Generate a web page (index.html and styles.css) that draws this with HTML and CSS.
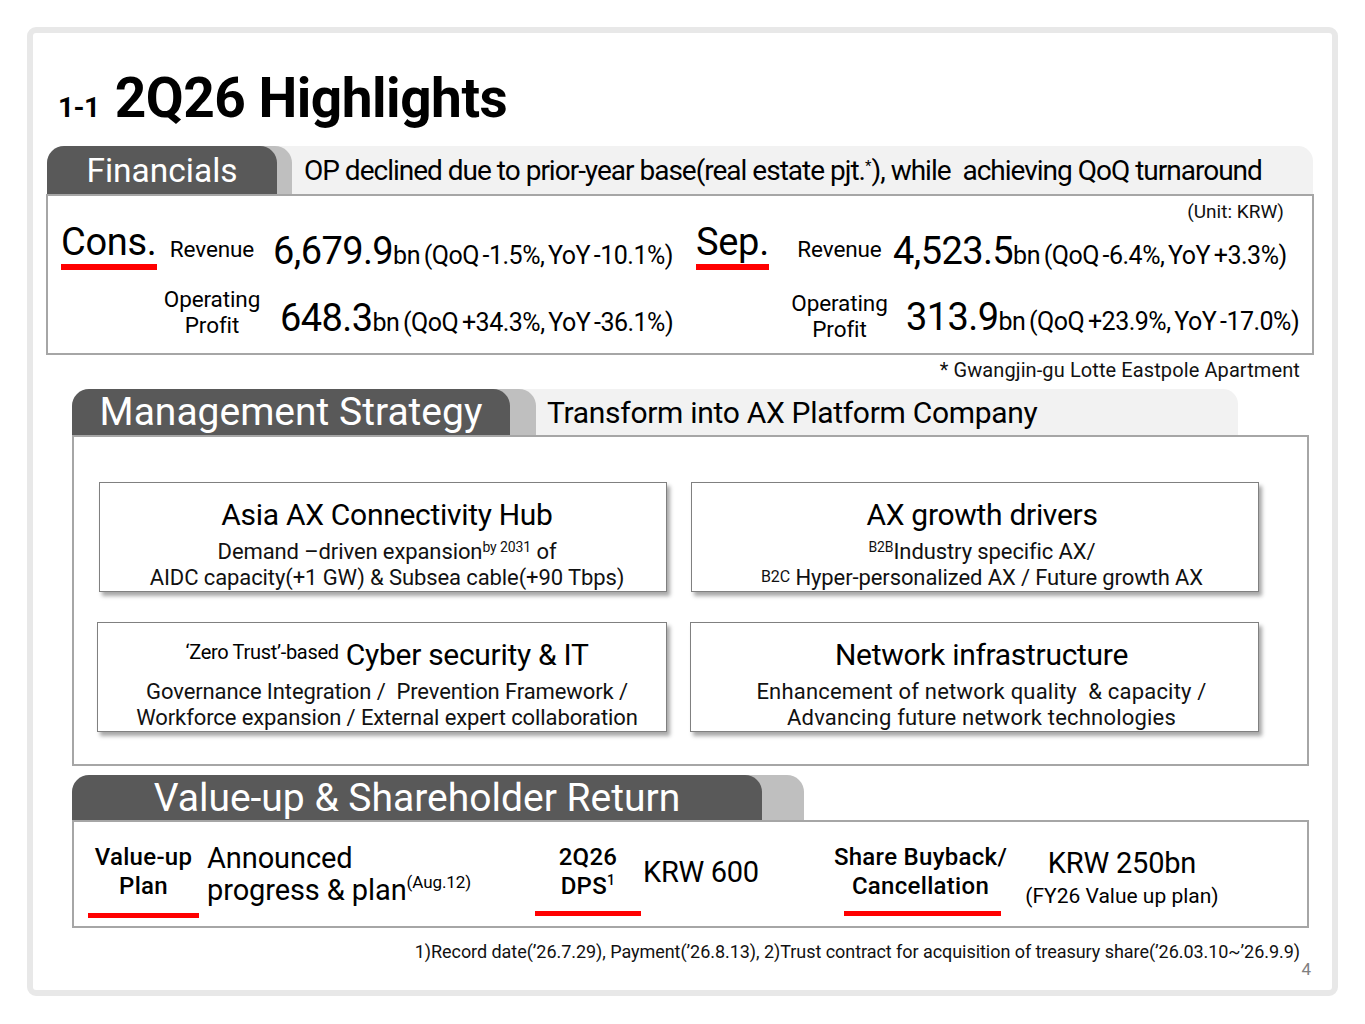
FILE: index.html
```html
<!DOCTYPE html>
<html lang="en">
<head>
<meta charset="utf-8">
<title>2Q26 Highlights</title>
<link rel="stylesheet" href="styles.css">
</head>
<body>
<div class="frame">
  <h1 class="title"><span class="title-num">1-1</span><span class="title-main">2Q26 Highlights</span></h1>

  <section class="fin">
    <div class="hdr fin-hdr">
      <div class="tab fin-tab">Financials</div>
      <div class="hdr-text fin-hdr-text">OP declined due to prior-year base(real estate pjt.<sup>*</sup>), while &nbsp;achieving QoQ turnaround</div>
    </div>
    <div class="fin-box">
      <div class="unit">(Unit: KRW)</div>
      <div class="fin-grid">
        <div class="fin-half fin-left">
          <div class="seg"><span class="seg-name">Cons.</span></div>
          <div class="fin-rows">
            <div class="fin-row r1">
              <div class="metric">Revenue</div>
              <div class="val v-rev"><span class="big">6,679.9</span><span class="small">bn (QoQ -1.5%, YoY -10.1%)</span></div>
            </div>
            <div class="fin-row r2">
              <div class="metric">Operating<br>Profit</div>
              <div class="val v-op"><span class="big">648.3</span><span class="small">bn (QoQ +34.3%, YoY -36.1%)</span></div>
            </div>
          </div>
        </div>
        <div class="fin-half fin-right">
          <div class="seg seg-sep"><span class="seg-name">Sep.</span></div>
          <div class="fin-rows">
            <div class="fin-row r1">
              <div class="metric">Revenue</div>
              <div class="val v-rev2"><span class="big">4,523.5</span><span class="small">bn (QoQ -6.4%, YoY +3.3%)</span></div>
            </div>
            <div class="fin-row r2 r2-right">
              <div class="metric">Operating<br>Profit</div>
              <div class="val v-op2"><span class="big">313.9</span><span class="small">bn (QoQ +23.9%, YoY -17.0%)</span></div>
            </div>
          </div>
        </div>
      </div>
    </div>
    <div class="note">* Gwangjin-gu Lotte Eastpole Apartment</div>
  </section>

  <section class="mgmt">
    <div class="hdr mgmt-hdr">
      <div class="tab mgmt-tab">Management Strategy</div>
      <div class="hdr-text mgmt-hdr-text">Transform into AX Platform Company</div>
    </div>
    <div class="mgmt-box">
      <div class="card">
        <div class="card-title">Asia AX Connectivity Hub</div>
        <div class="card-line">Demand –driven expansion<sup class="sup-s">by 2031</sup> of</div>
        <div class="card-line">AIDC capacity(+1 GW) &amp; Subsea cable(+90 Tbps)</div>
      </div>
      <div class="card card-r">
        <div class="card-title">AX growth drivers</div>
        <div class="card-line"><sup class="sup-s">B2B</sup>Industry specific AX/</div>
        <div class="card-line"><span class="tag">B2C</span> Hyper-personalized AX / Future growth AX</div>
      </div>
      <div class="card card-l2">
        <div class="card-title"><span class="pre">‘Zero Trust’-based</span> Cyber security &amp; IT</div>
        <div class="card-line">Governance Integration / &nbsp;Prevention Framework /</div>
        <div class="card-line">Workforce expansion / External expert collaboration</div>
      </div>
      <div class="card card-r card-b">
        <div class="card-title">Network infrastructure</div>
        <div class="card-line">Enhancement of network quality &nbsp;&amp; capacity /</div>
        <div class="card-line">Advancing future network technologies</div>
      </div>
    </div>
  </section>

  <section class="vu">
    <div class="hdr vu-hdr">
      <div class="tab vu-tab">Value-up &amp; Shareholder Return</div>
    </div>
    <div class="vu-box">
      <div class="vu-label lab1">
        <div class="lab-text">Value-up<br>Plan</div>
        <div class="lab-line"></div>
      </div>
      <div class="vu-text announce">Announced<br>progress &amp; plan<sup class="sup-a">(Aug.12)</sup></div>
      <div class="vu-label lab2">
        <div class="lab-text">2Q26<br>DPS<sup class="sup-d">1</sup></div>
        <div class="lab-line"></div>
      </div>
      <div class="vu-text krw600">KRW 600</div>
      <div class="vu-label lab3">
        <div class="lab-text">Share Buyback/<br>Cancellation</div>
        <div class="lab-line"></div>
      </div>
      <div class="vu-text krw250">
        <div class="k-main">KRW 250bn</div>
        <div class="k-sub">(FY26 Value up plan)</div>
      </div>
    </div>
  </section>

  <div class="foot">1)Record date(’26.7.29), Payment(’26.8.13), 2)Trust contract for acquisition of treasury share(’26.03.10~’26.9.9)</div>
  <div class="page">4</div>
</div>
</body>
</html>
```

FILE: styles.css
```css
* { box-sizing: border-box; }
html, body { margin: 0; padding: 0; background: #ffffff; }
body { font-family: Roboto, "Liberation Sans", sans-serif; color: #000; }

.frame {
  margin: 27px 0 0 27px;
  width: 1311px;
  height: 969px;
  border: 6px solid #e8e8e8;
  border-radius: 9px;
  background: #fff;
  display: flex;
  flex-direction: column;
}

/* Title */
.title {
  margin: 35px 0 18px 25px;
  height: 60px;
  line-height: 60px;
  font-weight: 700;
  display: flex;
  align-items: baseline;
}
.title-num { font-size: 28px; margin-right: 15px; letter-spacing: -0.5px; }
.title-main { font-size: 55px; letter-spacing: -0.5px; }

/* Generic section headers */
.hdr {
  display: flex;
  align-items: center;
  background: #f2f2f2;
}
.tab {
  background: #595959;
  color: #fff;
  display: flex;
  align-items: center;
  justify-content: center;
  border-radius: 17px 17px 0 0;
  flex: none;
  position: relative;
}
.hdr-text { color: #000; white-space: nowrap; }

/* Financials */
.fin { margin-left: 13px; width: 1268px; }
.fin-hdr { height: 48px; width: 1266px; margin-left: 1px; border-radius: 17px 15px 0 0; }
.fin-tab { width: 230px; height: 48px; font-size: 33.5px; box-shadow: 15px 0 0 #bfbfbf; }
.fin-hdr-text {
  margin-left: 27px;
  font-size: 28px;
  letter-spacing: -1px;
  padding-top: 1px;
}
.fin-hdr-text sup { font-size: 15px; vertical-align: 9px; letter-spacing: 0; line-height: 0; }

.fin-box {
  height: 161px;
  border: 2px solid #a6a6a6;
  padding: 5px 28px 0 13px;
}
.unit { text-align: right; font-size: 19px; line-height: 22px; color: #111; }
.fin-grid { display: flex; }
.fin-half { display: flex; flex: none; }
.fin-left { width: 635px; }
.seg { width: 99px; flex: none; }
.seg-sep { width: 93px; }
.seg-name {
  display: inline-block;
  font-size: 38px;
  line-height: 38px;
  padding-bottom: 3px;
  border-bottom: 6px solid #ff0000;
  letter-spacing: -0.3px;
}
.fin-rows { display: flex; flex-direction: column; }
.fin-row { display: flex; align-items: center; }
.r1 { height: 52px; }
.r2 { height: 74px; }
.metric {
  width: 104px;
  flex: none;
  text-align: center;
  font-size: 22.5px;
  line-height: 26px;
  letter-spacing: -0.1px;
}
.fin-right .metric { width: 101px; }
.r2-right { padding-top: 8px; }
.val { white-space: nowrap; }
.v-rev { margin-left: 9px; padding-top: 4px; }
.v-rev2 { margin-left: 3px; padding-top: 4px; }
.v-op { margin-left: 16px; padding-top: 12px; }
.v-op2 { margin-left: 16px; padding-top: 2px; }
.big { font-size: 38px; letter-spacing: -0.6px; }
.small { font-size: 25px; letter-spacing: -0.5px; word-spacing: -2px; }

.note {
  height: 34px;
  line-height: 30px;
  text-align: right;
  padding-right: 14px;
  font-size: 20px;
  letter-spacing: 0.1px;
  color: #111;
}

/* Management */
.mgmt { margin-left: 39px; width: 1237px; }
.mgmt-hdr { height: 46px; width: 1166px; border-radius: 17px 15px 0 0; }
.mgmt-tab { width: 438px; height: 46px; font-size: 39px; box-shadow: 26px 0 0 #bfbfbf; }
.mgmt-hdr-text { margin-left: 37px; font-size: 30px; letter-spacing: -0.3px; }

.mgmt-box {
  height: 331px;
  border: 2px solid #a6a6a6;
  padding: 45px 0 0 25px;
  display: grid;
  grid-template-columns: 568px 568px;
  grid-template-rows: 110px 110px;
  column-gap: 24px;
  row-gap: 30px;
}
.card {
  border: 1px solid #808080;
  background: #fff;
  box-shadow: 3px 4px 4px rgba(0, 0, 0, 0.35);
  text-align: center;
  padding-top: 14px;
  padding-left: 8px;
}
.card-r { padding-left: 14px; }
.card-b { margin-left: -1px; }
.card-l2 { margin-left: -2px; padding-left: 10px; }
.card-title { font-size: 30px; line-height: 36px; margin-bottom: 6px; letter-spacing: -0.3px; white-space: nowrap; }
.card-line { font-size: 22px; line-height: 26px; color: #111; letter-spacing: -0.1px; white-space: nowrap; }
.card-b .card-line { letter-spacing: 0.2px; }
.pre { font-size: 20px; vertical-align: 6px; letter-spacing: -0.3px; line-height: 0; }
.sup-s { font-size: 14px; vertical-align: 7px; line-height: 0; }
.tag { font-size: 16px; vertical-align: 3px; line-height: 0; }

/* Value-up */
.vu { margin-left: 39px; width: 1237px; margin-top: 9px; }
.vu-hdr { height: 45px; background: transparent; }
.vu-tab { width: 690px; height: 45px; font-size: 39px; box-shadow: 42px 0 0 #bfbfbf; }

.vu-box {
  height: 108px;
  border: 2px solid #a6a6a6;
  padding-left: 14px;
  display: flex;
  align-items: flex-start;
}
.vu-label { display: flex; flex-direction: column; align-items: center; flex: none; }
.lab-text {
  font-size: 24px;
  line-height: 28.5px;
  font-weight: 500;
  text-align: center;
  padding-top: 21px;
  letter-spacing: 0.3px;
  white-space: nowrap;
}
.lab-line { height: 5px; background: #ff0000; margin-top: 14px; }
.lab1 { width: 111px; }
.lab1 .lab-line { width: 111px; margin-top: 13px; }
.lab2 { width: 106px; }
.lab2 .lab-line { width: 106px; margin-top: 11px; }
.lab3 { width: 179px; }
.lab3 .lab-line { width: 157px; margin-top: 11px; margin-left: 4px; }
.sup-d { font-size: 14px; vertical-align: 9px; line-height: 0; }

.vu-text { flex: none; white-space: nowrap; }
.announce {
  width: 328px;
  margin-left: 8px;
  font-size: 29px;
  line-height: 32px;
  padding-top: 20px;
  letter-spacing: -0.1px;
}
.sup-a { font-size: 17px; vertical-align: 12px; line-height: 0; }
.krw600 { width: 188px; margin-left: 2px; font-size: 29px; line-height: 34px; padding-top: 33px; letter-spacing: -0.3px; }
.krw250 { width: 196px; margin-left: 14px; text-align: center; padding-top: 24px; }
.k-main { font-size: 29px; line-height: 34px; letter-spacing: -0.2px; }
.k-sub { font-size: 21px; line-height: 32px; }

.foot {
  margin-top: 13px;
  line-height: 22px;
  font-size: 18px;
  text-align: right;
  padding-right: 32px;
  color: #111;
  letter-spacing: -0.05px;
}
.page {
  margin-top: -3px;
  line-height: 18px;
  font-size: 17px;
  text-align: right;
  padding-right: 21px;
  color: #808080;
}
```
